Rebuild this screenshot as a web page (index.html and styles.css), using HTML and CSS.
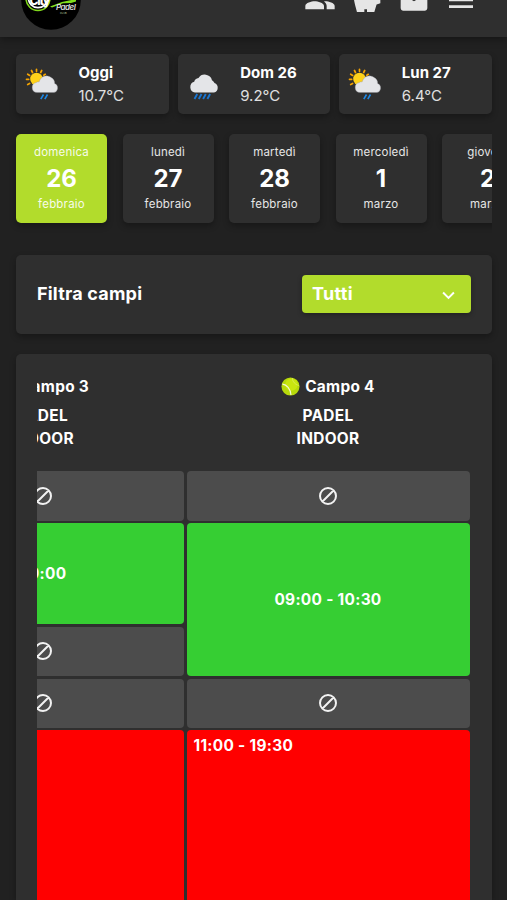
FILE: index.html
```
<!DOCTYPE html>
<html lang="it">

<head>
    <meta charset="UTF-8">
    <meta name="viewport" content="width=device-width, initial-scale=1">
    <title>City Padel Club</title>
    <link rel="stylesheet" href="styles.css">
</head>

<body>
    <!-- Icons used more than once -->
    <svg class="sprite" width="0" height="0">
        <symbol id="cloud" viewBox="0 0 36 36">
            <path fill="#e4e5e8" d="M9 26.500a5.500 5.500 0 0 1-.8-10.700 5 5 0 0 1 4.300-3.800A7.500 7.500 0 0 1 26 14.200a6 6 0 0 1 2.500 2.800 5 5 0 0 1-.5 9.500z" />
        </symbol>
        <symbol id="sun-rain" viewBox="0 0 36 36">
            <g stroke="#f6a400" stroke-width="1.7" stroke-linecap="round">
                <path d="M11.500 3.300v2M6.500 4.500l1 2M16.700 4.500l-1 2M2.700 8.200l2 1.200M1.500 13.300h2.200M2.700 18.500l1.900-1M20.300 8.300l-1.500 1" />
            </g>
            <circle cx="11.500" cy="13" r="6.300" fill="#ffd21a" />
            <path fill="#e4e5e8" stroke="#85858a" stroke-width=".3" d="M12 26.500a5 5 0 0 1-.8-9.900q.8-1 3-.8a7.500 7.500 0 0 1 12-4.300 6.500 6.500 0 0 1 3.500 6 4.700 4.700 0 0 1-1 9z" />
            <path stroke="#1e88e5" stroke-width="1.600" d="M18.500 28.500l-2.700 4.700M22.500 28.500l-2.700 4.700" />
        </symbol>
        <symbol id="blocked" viewBox="0 0 24 24">
            <path fill="none" stroke="#f2f2f2" stroke-width="2" d="M12 4a8 8 0 1 0 0 16a8 8 0 1 0 0-16zM6.500 17.500L17.500 6.500" />
        </symbol>
        <symbol id="ball" viewBox="0 0 20 20">
            <circle cx="10" cy="10" r="9.500" fill="#b7d90b" />
            <circle cx="11" cy="8" r="6.500" fill="#c9e60f" />
            <path fill="none" stroke="#f4f8d8" stroke-width="1.200" d="M1.500 7.500C6 8 10 12 10.500 19" />
            <path fill="none" stroke="#dcee6a" stroke-width=".8" d="M12 1c0 4 3 7 7 8" />
        </symbol>
    </svg>

    <header class="header">
        <svg class="logo" viewBox="0 0 60 60">
            <circle cx="30" cy="30" r="29.800" fill="#000" />
            <circle cx="17" cy="28.500" r="12" fill="none" stroke="#80d81c" stroke-width="1.500" />
            <circle cx="17" cy="28" r="9.600" fill="none" stroke="#fff" stroke-width="1.800" />
            <text class="logo-city" x="8.500" y="35">City</text>
            <path d="M29 36.500l12-4.500 14-3v2.500l-5 1.500-8 .3-11 4.200z" fill="#80e01c" />
            <text class="logo-padel" x="35" y="40">Padel</text>
            <text class="logo-club" x="39" y="43.500">CLUB</text>
        </svg>
        <nav class="header-icons">
            <svg viewBox="0 0 24 24"><path d="M16 11c1.660 0 2.990-1.340 2.990-3S17.660 5 16 5s-3 1.340-3 3 1.340 3 3 3zm-8 0c1.660 0 2.990-1.340 2.990-3S9.660 5 8 5 5 6.340 5 8s1.340 3 3 3zm0 2c-2.330 0-7 1.170-7 3.500V19h14v-2.500c0-2.330-4.670-3.500-7-3.500zm8 0c-.29 0-.62.020-.97.050 1.160.84 1.970 1.970 1.970 3.450V19h6v-2.500c0-2.330-4.670-3.500-7-3.500z" /></svg>
            <svg viewBox="0 0 24 24"><path d="M19.830 7.500l-2.270-2.270c.07-.42.18-.81.32-1.150.08-.18.12-.37.12-.58 0-.83-.67-1.500-1.500-1.500-1.640 0-3.090.79-4 2h-5C4.460 4 2 6.460 2 9.500S4.500 21 4.500 21H10v-2h2v2h5.500l1.680-5.590 2.820-.94V7.500h-2.170z" /></svg>
            <svg viewBox="0 0 24 24"><path d="M20 4H4c-1.100 0-1.990.9-1.990 2L2 18c0 1.100.9 2 2 2h16c1.100 0 2-.9 2-2V6c0-1.100-.9-2-2-2zm0 4l-8 5-8-5V6l8 5 8-5v2z" /></svg>
            <svg viewBox="0 0 24 24"><path d="M3 18h18v-2H3v2zm0-5h18v-2H3v2zM3 6v2h18V6H3z" /></svg>
        </nav>
    </header>

    <main class="content">
        <!-- Weather -->
        <section class="weather">
            <div class="card weather-card">
                <svg class="weather-icon"><use href="#sun-rain" /></svg>
                <div>
                    <div class="weather-day">Oggi</div>
                    <div class="weather-temp">10.7°C</div>
                </div>
            </div>
            <div class="card weather-card">
                <svg class="weather-icon" viewBox="0 0 36 36">
                    <use href="#cloud" />
                    <path stroke="#1976d2" stroke-width="1.900" d="M11.200 28l-2.700 5M15.500 28l-2.700 5M19.800 28l-2.700 5M24.100 28l-2.700 5" />
                </svg>
                <div>
                    <div class="weather-day">Dom 26</div>
                    <div class="weather-temp">9.2°C</div>
                </div>
            </div>
            <div class="card weather-card">
                <svg class="weather-icon"><use href="#sun-rain" /></svg>
                <div>
                    <div class="weather-day">Lun 27</div>
                    <div class="weather-temp">6.4°C</div>
                </div>
            </div>
        </section>

        <!-- Days -->
        <section class="days">
            <div class="card day active"><span>domenica</span><b>26</b><span>febbraio</span></div>
            <div class="card day"><span>lunedì</span><b>27</b><span>febbraio</span></div>
            <div class="card day"><span>martedì</span><b>28</b><span>febbraio</span></div>
            <div class="card day"><span>mercoledì</span><b>1</b><span>marzo</span></div>
            <div class="card day"><span>giovedì</span><b>2</b><span>marzo</span></div>
        </section>

        <section class="card filter">
            <span class="filter-label">Filtra campi</span>
            <button class="select" type="button">
                Tutti
                <svg class="chevron" viewBox="0 0 12 8"><path d="M1 1.200l5 5 5-5" /></svg>
            </button>
        </section>

        <!-- Courts -->
        <section class="card courts">
            <div class="courts-scroll">
                <div class="court">
                    <div class="court-head">
                        <div class="court-name"><svg class="ball"><use href="#ball" /></svg>Campo 3</div>
                        <div>PADEL</div>
                        <div>INDOOR</div>
                    </div>
                    <div class="slots">
                        <div class="slot"><svg class="blocked"><use href="#blocked" /></svg></div>
                        <div class="slot free span-2"><span class="slot-time">09:00</span></div>
                        <div class="slot"><svg class="blocked"><use href="#blocked" /></svg></div>
                        <div class="slot"><svg class="blocked"><use href="#blocked" /></svg></div>
                        <div class="slot busy"></div>
                    </div>
                </div>
                <div class="court">
                    <div class="court-head">
                        <div class="court-name"><svg class="ball"><use href="#ball" /></svg>Campo 4</div>
                        <div>PADEL</div>
                        <div>INDOOR</div>
                    </div>
                    <div class="slots">
                        <div class="slot"><svg class="blocked"><use href="#blocked" /></svg></div>
                        <div class="slot free span-3"><span class="slot-time">09:00 - 10:30</span></div>
                        <div class="slot"><svg class="blocked"><use href="#blocked" /></svg></div>
                        <div class="slot busy"><span class="slot-time">11:00 - 19:30</span></div>
                    </div>
                </div>
            </div>
        </section>
    </main>
</body>

</html>
```
FILE: styles.css
```
* {
    box-sizing: border-box;
}

body {
    display: flex;
    flex-direction: column;
    font-family: Inter, "Liberation Sans", sans-serif;
    background-color: #212121;
    color: #fff;
    margin: 0;
    height: 100vh;
    overflow: hidden;
}

.sprite {
    display: block;
    flex: none;
}

.header {
    display: flex;
    justify-content: space-between;
    align-items: flex-end;
    flex: none;
    height: 37px;
    padding: 0 30.5px 7px 21px;
    background-color: #2f2f2f;
    box-shadow: 0 2px 8px rgba(0, 0, 0, 0.4);
}

.logo {
    width: 60px;
    height: 60px;
    flex: none;
}

.logo-city {
    font-size: 12px;
    font-weight: 800;
    fill: #fff;
    letter-spacing: -1.2px;
}

.logo-padel {
    font-size: 8px;
    font-style: italic;
    font-weight: 600;
    fill: #ddd;
    letter-spacing: -0.5px;
}

.logo-club {
    font-size: 2.5px;
    fill: #c5d9a8;
}

.header-icons {
    display: flex;
    gap: 15px;
    margin-bottom: 14px;
}

.header-icons svg {
    width: 32px;
    height: 32px;
    fill: #e6e6e6;
}

.content {
    display: flex;
    flex-direction: column;
    flex: 1;
    min-height: 0;
    padding: 17px 15px 0 16px;
}

.card {
    background-color: #2f2f2f;
    border-radius: 5px;
    box-shadow: 0 3px 6px rgba(0, 0, 0, 0.3);
}

.weather {
    display: grid;
    grid-template-columns: repeat(3, 1fr);
    gap: 9px;
}

.weather-card {
    display: flex;
    align-items: center;
    gap: 18px;
    height: 60px;
    padding-left: 8.5px;
}

.weather-icon {
    width: 36px;
    height: 36px;
    flex: none;
}

.weather-day {
    font-size: 15px;
    font-weight: 700;
    line-height: 23px;
}

.weather-temp {
    font-size: 15px;
    line-height: 23px;
    color: #e0e0e0;
}

.days {
    display: flex;
    flex: none;
    gap: 15.5px;
    /* room for the card shadows, the row is clipped on the right */
    margin: 0 0 0 -16px;
    padding: 20.4px 0 31.6px 16px;
    overflow: hidden;
}

.day {
    display: flex;
    flex-direction: column;
    align-items: center;
    flex: none;
    width: 91px;
    height: 89px;
    padding-top: 9.6px;
    font-size: 11.5px;
    line-height: 17px;
    letter-spacing: 0.2px;
    color: #e6e6e6;
}

.day b {
    font-size: 24px;
    line-height: 35px;
    letter-spacing: 0;
    color: #fff;
}

.day.active {
    background-color: #b2dc2c;
    color: #f7fbe9;
}

.filter {
    display: flex;
    justify-content: space-between;
    align-items: center;
    flex: none;
    height: 79px;
    padding: 0 21px;
}

.filter-label {
    font-size: 18px;
    font-weight: 700;
    letter-spacing: 0.2px;
    margin-top: -2px;
}

.select {
    display: flex;
    justify-content: space-between;
    align-items: center;
    width: 169px;
    height: 38px;
    margin-top: -1px;
    padding: 0 16px 0 10px;
    border: none;
    border-radius: 4px;
    background-color: #b2dc2c;
    color: #fff;
    font-family: inherit;
    font-size: 18px;
    font-weight: 700;
    letter-spacing: 0.3px;
    box-shadow: 0 2px 5px rgba(0, 0, 0, 0.3);
}

.chevron {
    width: 13px;
    height: 9px;
    margin-top: 3px;
    fill: none;
    stroke: #fff;
    stroke-width: 1.8;
}

.courts {
    flex: 1;
    min-height: 0;
    margin-top: 20.4px;
    padding: 21px 22.5px 0 21px;
    border-radius: 5px 5px 0 0;
}

/* scrolled to the last court */
.courts-scroll {
    display: flex;
    justify-content: flex-end;
    gap: 2.5px;
    height: 100%;
    overflow: hidden;
}

.court {
    flex: none;
    width: 283px;
}

.court-head {
    height: 96px;
    text-align: center;
    font-size: 15.4px;
    font-weight: 700;
    line-height: 23px;
    letter-spacing: 0.3px;
}

.court-name {
    display: flex;
    justify-content: center;
    align-items: center;
    gap: 5px;
    margin-bottom: 6px;
}

.ball {
    width: 19px;
    height: 19px;
}

.slots {
    display: grid;
    grid-auto-rows: 49.3px;
    gap: 2.5px;
}

.slot {
    display: flex;
    justify-content: center;
    align-items: center;
    background-color: #4c4c4c;
    border-radius: 4px;
}

.blocked {
    width: 24px;
    height: 24px;
}

.slot-time {
    font-size: 15.4px;
    font-weight: 700;
    letter-spacing: 0.3px;
}

.span-2 {
    grid-row: span 2;
}

.span-3 {
    grid-row: span 3;
}

.free {
    background-color: #36ce33;
}

.free .slot-time {
    margin-top: -1px;
}

.busy {
    grid-row: span 17;
    justify-content: flex-start;
    align-items: flex-start;
    padding: 6px 7px;
    background-color: #f00;
}
```
